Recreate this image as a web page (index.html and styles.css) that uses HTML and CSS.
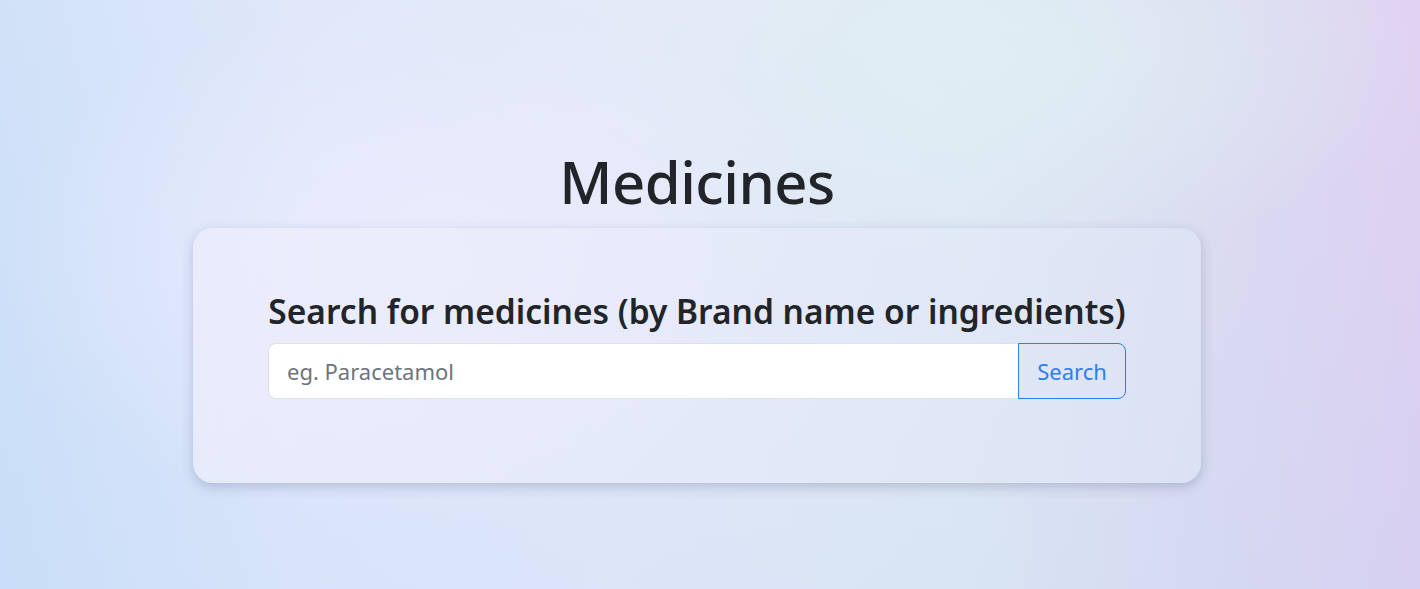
FILE: index.html
```html
<!DOCTYPE html>
<html lang="en">
<head>
<meta charset="utf-8">
<title>Medicines</title>
<link rel="stylesheet" href="styles.css">
</head>
<body>
<main class="page">
  <h1 class="title">Medicines</h1>
  <section class="card">
    <h2 class="card-heading">Search for medicines (by Brand name or ingredients)</h2>
    <form class="input-group">
      <input class="search-input" type="text" placeholder="eg. Paracetamol">
      <button class="search-btn" type="button">Search</button>
    </form>
  </section>
</main>
</body>
</html>
```
FILE: styles.css
```css
* { box-sizing: border-box; }
html, body { margin: 0; height: 100%; }
body {
  font-family: "Noto Sans", "Open Sans", sans-serif;
  color: #212529;
  background:
    radial-gradient(ellipse 30% 45% at 30% 45%, rgba(240,238,255,0.75), rgba(240,238,255,0) 100%),
    radial-gradient(ellipse 30% 35% at 70% 10%, rgba(222,240,244,0.8), rgba(222,240,244,0) 100%),
    linear-gradient(180deg, rgba(240,232,250,0.2) 0%, rgba(200,215,250,0.25) 100%),
    linear-gradient(90deg, #c9e0f8 0%, #dde8fa 22%, #e3eaf8 45%, #dde9f2 68%, #d9d7ee 88%, #dccdef 100%);
  overflow: hidden;
}
.page {
  display: flex;
  flex-direction: column;
  align-items: center;
  padding-top: 147px;
  padding-right: 26px;
}
.title {
  margin: 0 0 11px;
  font-size: 58px;
  font-weight: 500;
  line-height: 1.2;
  letter-spacing: -0.5px;
}
.card {
  width: 1008px;
  height: 255px;
  padding: 63px 75px 0;
  border-radius: 20px;
  background: linear-gradient(100deg, rgba(238,238,253,0.7), rgba(222,230,245,0.6));
  box-shadow: 0 4px 12px rgba(60, 70, 110, 0.25);
}
.card-heading {
  margin: 0 0 12px;
  font-size: 33.5px;
  font-weight: 600;
  line-height: 1.2;
  text-align: center;
}
.input-group {
  display: flex;
  height: 56px;
}
.search-input {
  flex: 1;
  min-width: 0;
  font: inherit;
  font-size: 22px;
  padding: 0 18px;
  border: 1px solid #dee2e6;
  border-right: none;
  border-radius: 8px 0 0 8px;
  background: #fff;
  color: #212529;
  outline: none;
}
.search-input::placeholder { color: #6c757d; }
.search-btn {
  width: 108px;
  font: inherit;
  font-size: 22px;
  color: #2f7cf6;
  background: transparent;
  border: 1px solid #2f7cf6;
  border-radius: 0 8px 8px 0;
  padding: 0;
}
```
